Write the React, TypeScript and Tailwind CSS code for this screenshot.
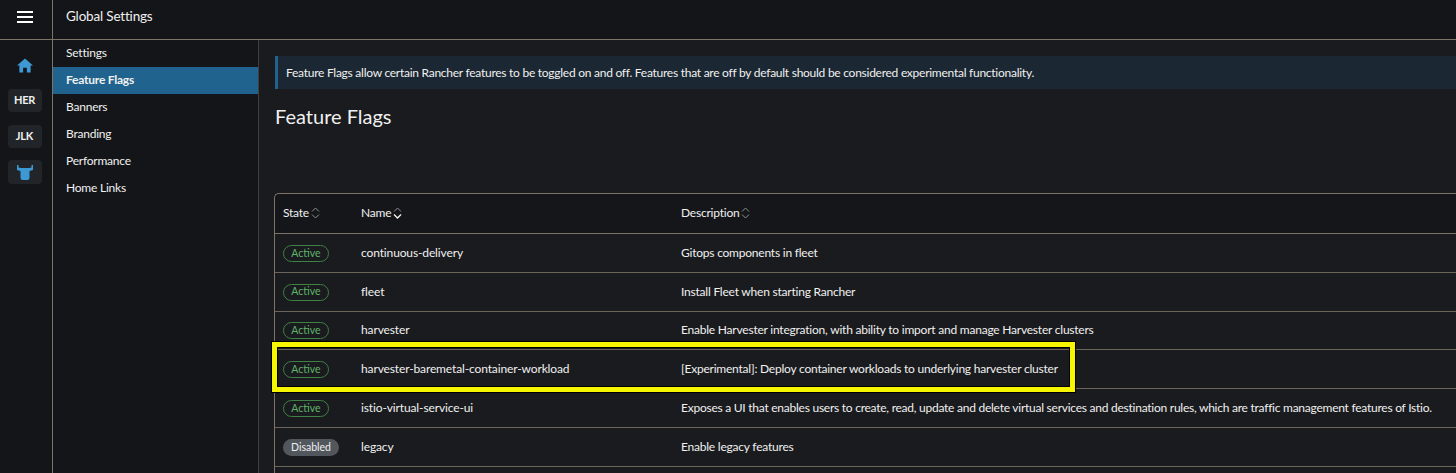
import React from "react";

const Sort = ({ active = false }: { active?: boolean }) => (
  <svg width="9" height="12" viewBox="0 0 9 12" fill="none" className="ml-[2px]">
    <path d="M1 4.5 L4.5 1 L8 4.5" stroke="#8b8e93" strokeWidth="1" />
    <path d="M1 7.5 L4.5 11 L8 7.5" stroke={active ? "#f2f2f2" : "#8b8e93"} strokeWidth={active ? 1.4 : 1} />
  </svg>
);

const rows: [string, string, string][] = [
  ["Active", "continuous-delivery", "Gitops components in fleet"],
  ["Active", "fleet", "Install Fleet when starting Rancher"],
  ["Active", "harvester", "Enable Harvester integration, with ability to import and manage Harvester clusters"],
  ["Active", "harvester-baremetal-container-workload", "[Experimental]: Deploy container workloads to underlying harvester cluster"],
  ["Active", "istio-virtual-service-ui", "Exposes a UI that enables users to create, read, update and delete virtual services and destination rules, which are traffic management features of Istio."],
  ["Disabled", "legacy", "Enable legacy features"],
];

const nav = ["Settings", "Feature Flags", "Banners", "Branding", "Performance", "Home Links"];

export default function App() {
  return (
    <div className="relative h-[473px] w-[1456px] overflow-hidden bg-[#1a1b1e] text-[12px] tracking-[-0.22px] text-[#f0f0f0] [font-family:Lato,'Liberation_Sans',sans-serif]">
      <header className="flex h-[40px] border-b border-[#7d7467] bg-[#141518]">
        <div className="flex w-[53px] items-center justify-center border-r border-[#7d7467] pr-[3px] pb-[6px]">
          <div className="flex w-[16px] flex-col gap-[3px]">
            <span className="h-[2px] bg-white" />
            <span className="h-[2px] bg-white" />
            <span className="h-[2px] bg-white" />
          </div>
        </div>
        <div className="pl-[13px] pt-[6px] text-[13.5px] leading-[20px] tracking-[-0.18px]">Global Settings</div>
      </header>
      <div className="flex h-[433px]">
        <aside className="flex w-[53px] shrink-0 flex-col items-center border-r border-[#7d7467] bg-[#141518] pr-[3px] pt-[18px]">
          <svg width="16" height="15" viewBox="0 0 17 16" className="mb-[16px]">
            <path d="M8.5 0.5 L17 8 L14.5 8 L14.5 15.5 L10.5 15.5 L10.5 10.5 L6.5 10.5 L6.5 15.5 L2.5 15.5 L2.5 8 L0 8 Z" fill="#3d98d3" />
          </svg>
          <div className="mb-[13px] flex h-[23px] w-[34px] shrink-0 items-center justify-center rounded-[4px] bg-[#212428] text-[11px] font-bold">HER</div>
          <div className="mb-[12px] flex h-[23px] w-[34px] shrink-0 items-center justify-center rounded-[4px] bg-[#212428] text-[11px] font-bold">JLK</div>
          <div className="flex h-[24px] w-[34px] shrink-0 items-center justify-center rounded-[4px] bg-[#212428]">
            <svg width="18" height="15" viewBox="0 0 18 15">
              <path d="M1 0 L2.5 0 L2.5 2.5 L5 3 L13 3 L15.5 2.5 L15.5 0 L17 0 L17 5 L13.5 6 L13.5 13 Q13.5 15 11.5 15 L6.5 15 Q4.5 15 4.5 13 L4.5 6 L1 5 Z" fill="#3d98d3" />
            </svg>
          </div>
        </aside>
        <nav className="w-[206px] shrink-0 border-r border-[#3f3f3f] bg-[#141518]">
          <div className="flex flex-col">
            {nav.map((n, i) => (
              <div
                key={n}
                className={
                  i === 1
                    ? "flex h-[27px] items-center bg-[#20638f] pb-[2px] pl-[13px] font-bold"
                    : "flex h-[27px] items-center pb-[2px] pl-[13px]"
                }
              >
                {n}
              </div>
            ))}
          </div>
        </nav>
        <main className="min-w-0 flex-1 pl-[16px] pt-[16px]">
          <div className="flex h-[33px] items-center whitespace-nowrap border-l-[3px] border-[#20638f] bg-[#1b2732] pl-[8px] tracking-[-0.26px]">
            Feature Flags allow certain Rancher features to be toggled on and off. Features that are off by default should be considered experimental functionality.
          </div>
          <h1 className="mt-[13px] text-[20px] leading-[28px] font-normal tracking-normal">Feature Flags</h1>
          <div className="-ml-[1px] mt-[63px] rounded-tl-[5px] border-t border-l border-[#7d7467] bg-[#15161a]">
            <div className="flex h-[40px] items-center border-b border-[#7d7467] pb-[2px]">
              <div className="flex w-[78px] shrink-0 items-center pl-[8px]">State<Sort /></div>
              <div className="flex w-[320px] shrink-0 items-center pl-[8px]">Name<Sort active /></div>
              <div className="flex items-center pl-[8px]">Description<Sort /></div>
            </div>
            {rows.map(([s, n, d]) => (
              <div key={n} className="flex h-[38.8px] items-center border-b border-[#6b6458] bg-[#1a1b1e] whitespace-nowrap">
                <div className="flex w-[78px] shrink-0 items-center pl-[8px]">
                  {s === "Active" ? (
                    <span className="mt-[1px] flex h-[17px] w-[46px] items-center justify-center rounded-full border border-[#3f8045] text-[10.5px] tracking-normal text-[#5fb36a]">Active</span>
                  ) : (
                    <span className="mt-[1px] flex h-[17px] w-[56px] items-center justify-center rounded-full bg-[#52575e] text-[10.5px] tracking-normal text-[#eeeeee]">Disabled</span>
                  )}
                </div>
                <div className="w-[320px] shrink-0 pl-[8px] tracking-[-0.13px]">{n}</div>
                <div className={d.length > 100 ? "pl-[8px] tracking-[-0.25px]" : "pl-[8px]"}>{d}</div>
              </div>
            ))}
            <div className="h-[20px] bg-[#1a1b1e]" />
          </div>
        </main>
      </div>
      <div className="pointer-events-none absolute left-[272px] top-[342px] h-[50px] w-[803px] border-[5px] border-[#f6f600] shadow-[0_0_0_1px_#000,inset_0_0_0_1px_#000]" />
    </div>
  );
}
